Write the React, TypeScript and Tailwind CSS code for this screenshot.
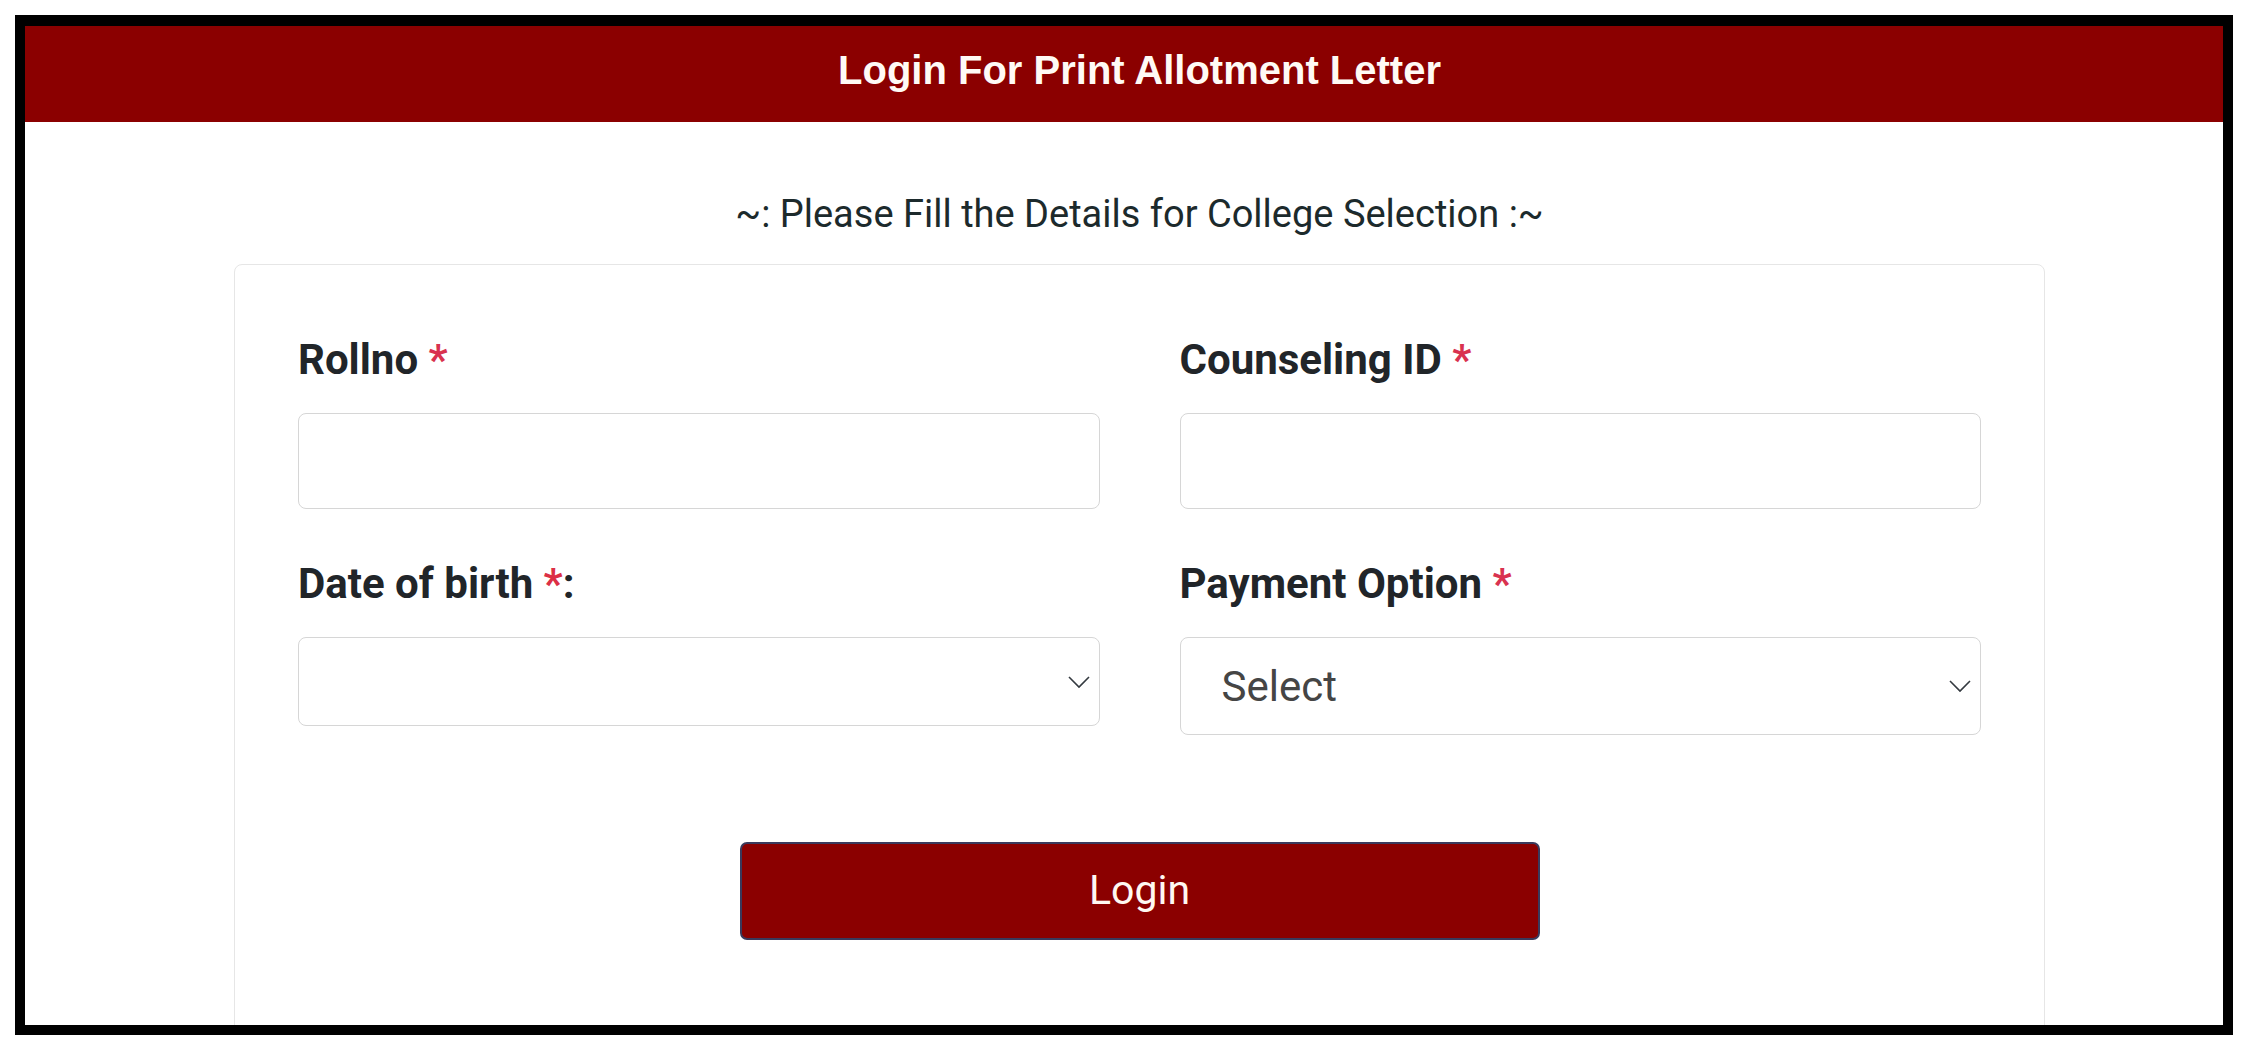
import type { ReactNode } from 'react';

function Required() {
  return <span className="text-[#d9324f]">*</span>;
}

function FieldLabel({ children }: { children: ReactNode }) {
  return <label className="mb-[30px] block text-[42px] leading-[47px] font-bold text-[#212529]">{children}</label>;
}

function Chevron() {
  return (
    <svg
      className="pointer-events-none absolute top-1/2 right-[10px] h-[13px] w-[22px] -translate-y-1/2 text-[#343a40]"
      viewBox="0 0 22 13"
      fill="none"
      stroke="currentColor"
      strokeWidth="1.6"
      aria-hidden="true"
    >
      <path d="M1 1.5 L11 11.5 L21 1.5" />
    </svg>
  );
}

function App() {
  return (
    <div className="min-h-screen bg-white pt-[15px] font-['Roboto','Liberation_Sans',sans-serif]">
      <div className="ml-[15px] h-[1020px] w-[2218px] overflow-hidden border-x-[10px] border-t-[11px] border-b-[10px] border-black bg-white">
        <header className="flex h-[96px] justify-center bg-[#8b0000] pt-[22px] pl-[31px]">
          <h1 className="font-['Liberation_Sans','Arial',sans-serif] text-[40px] leading-[44px] font-bold text-[#fffaf5]">
            Login For Print Allotment Letter
          </h1>
        </header>

        <section className="pl-[31px]">
          <p className="mt-[71px] text-center text-[38px] leading-[42px] text-[#1c2a2c]">
            ~: Please Fill the Details for College Selection :~
          </p>

          <div className="mx-auto mt-[29px] w-[1811px] rounded-[8px] border border-[#e6e6e6] bg-white px-[63px] pt-[71px] pb-[200px]">
            <div className="grid grid-cols-2 gap-x-[80px] gap-y-[51px]">
              <div>
                <FieldLabel>
                  Rollno <Required />
                </FieldLabel>
                <input
                  type="text"
                  className="block h-[96px] w-full rounded-[8px] border-[1.5px] border-[#d6d6d6] bg-white px-[40px] text-[40px] outline-none"
                />
              </div>
              <div>
                <FieldLabel>
                  Counseling ID <Required />
                </FieldLabel>
                <input
                  type="text"
                  className="block h-[96px] w-full rounded-[8px] border-[1.5px] border-[#d6d6d6] bg-white px-[40px] text-[40px] outline-none"
                />
              </div>
              <div>
                <FieldLabel>
                  Date of birth <span className="text-[#dc2f45]">*</span>:
                </FieldLabel>
                <div className="relative">
                  <select className="block h-[89px] w-full appearance-none rounded-[8px] border-[1.5px] border-[#d6d6d6] bg-white px-[40px] text-[40px] text-[#444] outline-none">
                    <option value=""></option>
                  </select>
                  <Chevron />
                </div>
              </div>
              <div>
                <FieldLabel>
                  Payment Option <Required />
                </FieldLabel>
                <div className="relative">
                  <select className="block h-[98px] w-full appearance-none rounded-[8px] border-[1.5px] border-[#d6d6d6] bg-white pl-[41px] text-[42px] text-[#454545] outline-none">
                    <option>Select</option>
                  </select>
                  <Chevron />
                </div>
              </div>
            </div>

            <div className="mt-[107px] flex justify-center">
              <button
                type="button"
                className="h-[98px] w-[800px] rounded-[7px] border-2 border-[#3a3a5c] bg-[#8b0000] text-[41px] text-[#fff8f2]"
              >
                Login
              </button>
            </div>
          </div>
        </section>
      </div>
    </div>
  );
}

export default App;
